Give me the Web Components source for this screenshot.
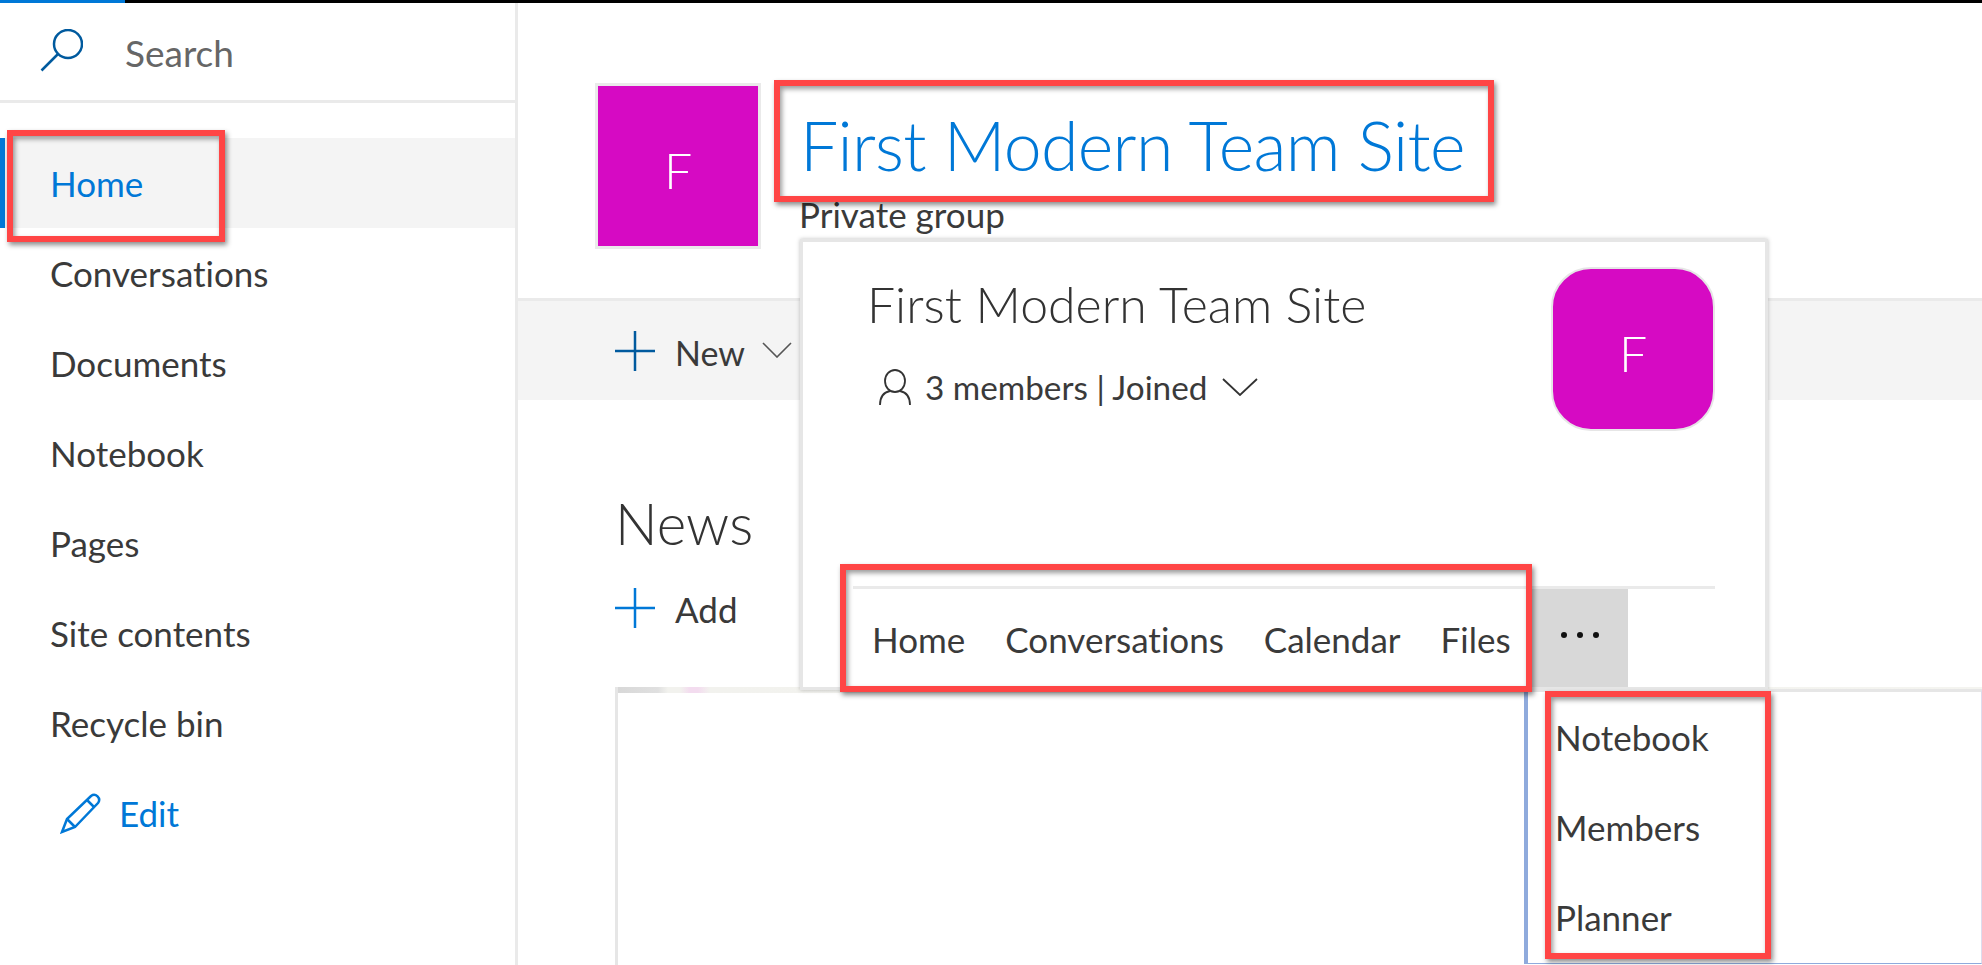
<!DOCTYPE html>
<html lang="en">
<head>
<meta charset="utf-8">
<title>First Modern Team Site</title>
<style>
  html,body{margin:0;height:100%;background:#fff}
  body{font-family:Lato,'Segoe UI','Open Sans',sans-serif;color:#333;overflow:hidden;font-variant-ligatures:none}
  .page{position:relative;width:1982px;height:965px;overflow:hidden}
  .cols{display:grid;grid-template-columns:518px 1fr;height:962px}
</style>
</head>
<body>
<div class="page">
  <sp-top-bar></sp-top-bar>
  <div class="cols">
    <sp-nav>
      <sp-nav-item active>Home</sp-nav-item>
      <sp-nav-item>Conversations</sp-nav-item>
      <sp-nav-item>Documents</sp-nav-item>
      <sp-nav-item>Notebook</sp-nav-item>
      <sp-nav-item>Pages</sp-nav-item>
      <sp-nav-item>Site contents</sp-nav-item>
      <sp-nav-item>Recycle bin</sp-nav-item>
      <sp-nav-edit>Edit</sp-nav-edit>
    </sp-nav>
    <sp-main></sp-main>
  </div>
  <sp-group-card></sp-group-card>
  <sp-more-menu>
    <span>Notebook</span>
    <span>Members</span>
    <span>Planner</span>
  </sp-more-menu>
  <!-- red annotations drawn over the screenshot -->
  <sp-callout style="left:7px;top:130px;width:218px;height:112px"></sp-callout>
  <sp-callout style="left:774px;top:80px;width:720px;height:122px"></sp-callout>
  <sp-callout style="left:840px;top:564px;width:692px;height:128px"></sp-callout>
  <sp-callout style="left:1545px;top:691px;width:226px;height:268px"></sp-callout>
</div>

<script>
const PLUS = color => `<svg width="40" height="40" viewBox="0 0 40 40"><path d="M0 20H40M20 0V40" stroke="${color}" stroke-width="2.5" fill="none"/></svg>`;

class SpTopBar extends HTMLElement {
  constructor() {
    super();
    this.attachShadow({ mode: 'open' }).innerHTML = `
    <style>
      :host{display:block;height:3px;background:#000}
      .progress{width:125px;height:3px;background:#0078d7}
    </style>
    <div class="progress"></div>`;
  }
}

class SpNav extends HTMLElement {
  constructor() {
    super();
    this.attachShadow({ mode: 'open' }).innerHTML = `
    <style>
      :host{display:block;border-right:3px solid #eaeaea;box-sizing:border-box;height:100%}
      .search{display:flex;align-items:center;height:97px;border-bottom:3px solid #eaeaea;box-sizing:content-box;padding-left:40px;gap:42px;color:#666;font-size:37px}
      .search svg{display:block;margin-top:-2px}
      .search span{padding-top:2px}
      .items{display:flex;flex-direction:column;padding-top:35px}
    </style>
    <div class="search">
      <svg width="43" height="43" viewBox="0 0 43 43" fill="none" stroke="#005a9e" stroke-width="2.5"><circle cx="28" cy="15" r="14"/><path d="M18 25L1.5 41.5"/></svg>
      <span>Search</span>
    </div>
    <div class="items"><slot></slot></div>`;
  }
}

class SpNavItem extends HTMLElement {
  constructor() {
    super();
    this.attachShadow({ mode: 'open' }).innerHTML = `
    <style>
      :host{display:flex;align-items:center;height:90px;padding-left:50px;font-size:35px;color:#3a3a3a;box-sizing:border-box;line-height:90px}
      :host([active]){background:#f4f4f4;color:#0078d7;box-shadow:inset 5px 0 0 #0078d7}
    </style>
    <slot></slot>`;
  }
}

class SpNavEdit extends HTMLElement {
  constructor() {
    super();
    this.attachShadow({ mode: 'open' }).innerHTML = `
    <style>
      :host{display:flex;align-items:center;height:90px;padding-left:60px;gap:18px;font-size:35px;color:#0078d7}
      svg{display:block}
    </style>
    <svg width="41" height="41" viewBox="0 0 41 41" fill="none" stroke="#0078d7" stroke-width="2.5"><path d="M2 39L7 26L31 3a5 5 0 0 1 7 7L15 34Z"/><path d="M7 26L15 34M27 7L34 14"/></svg>
    <slot></slot>`;
  }
}

class SpMain extends HTMLElement {
  constructor() {
    super();
    this.attachShadow({ mode: 'open' }).innerHTML = `
    <style>
      :host{display:flex;flex-direction:column;height:100%;min-width:0}
      .header{display:flex;height:295px;box-sizing:border-box;padding:80px 0 0 77px;gap:43px}
      .logo{width:160px;height:160px;box-sizing:content-box;border:3px solid #eaeaea;background:#d60ac3;color:#fff;display:flex;align-items:center;justify-content:center;font-size:50px;font-weight:300}
      .logo span{padding-top:8px}
      .titles{display:flex;flex-direction:column;margin-left:-5px}
      h1{margin:0 0 0 1px;font-size:68px;letter-spacing:-.65px;font-weight:300;color:#0078d7;line-height:100px;padding-top:12px}
      .sub{font-size:35px;line-height:40px;color:#3a3a3a;margin-top:-1px}
      .bar{display:flex;align-items:center;height:99px;border-top:3px solid #eaeaea;background:#f4f4f4;padding-left:97px;font-size:34px;color:#3a3a3a}
      .bar svg{display:block}
      .bar .label{margin-left:20px;padding-top:3px}
      .chev{margin-left:17px;margin-top:-2px}
      .news{flex:1;display:flex;flex-direction:column;padding-left:97px;min-height:0}
      h2{margin:0;font-size:56.5px;font-weight:300;line-height:80px;padding-top:83px;color:#333}
      .add{display:flex;align-items:center;height:40px;gap:20px;font-size:35px;margin-top:25px;color:#3a3a3a}
      .add svg{display:block}
      .add span{padding-top:2px}
      .image{flex:1;margin-top:59px;border-left:3px solid #e6e6e6}
      .strip{height:6px;background:linear-gradient(90deg,#d8d8d8 0,#e0e0e0 40px,#f2f2ee 50px,#f2f2ee 62px,#f3dcef 72px,#f3dcef 80px,#f2f2ee 92px,#f4f4f0 100%)}
    </style>
    <div class="header">
      <div class="logo"><span>F</span></div>
      <div class="titles">
        <h1>First Modern Team Site</h1>
        <div class="sub">Private group</div>
      </div>
    </div>
    <div class="bar">
      ${PLUS('#005a9e')}
      <span class="label">New</span>
      <svg class="chev" width="30" height="16" viewBox="0 0 30 16" fill="none" stroke="#555" stroke-width="1.6"><path d="M1 1L15 15L29 1"/></svg>
    </div>
    <div class="news">
      <h2>News</h2>
      <div class="add">${PLUS('#0078d7')}<span>Add</span></div>
      <div class="image"><div class="strip"></div></div>
    </div>`;
  }
}

class SpGroupCard extends HTMLElement {
  constructor() {
    super();
    this.attachShadow({ mode: 'open' }).innerHTML = `
    <style>
      :host{position:absolute;left:800px;top:239px;width:968px;height:451px;box-sizing:border-box;background:#fff;border:3px solid #e6e6e6;box-shadow:0 0 4px rgba(0,0,0,.25);display:flex;flex-direction:column}
      .top{display:flex;justify-content:space-between;height:345px;box-sizing:border-box;padding:25px 50px 0 64px}
      h3{margin:0;font-size:50px;font-weight:300;line-height:64px;color:#333;padding-top:5px}
      .meta{display:flex;align-items:center;margin:31px 0 0 12px;font-size:33.3px;color:#3a3a3a;height:40px}
      .meta svg{display:block}
      .meta span{margin-left:14px}
      .meta .chev{margin-left:15px}
      .tile{width:160px;height:160px;border:2px solid #e6e6e6;border-radius:40px;background:#d60ac3;color:#fff;display:flex;align-items:center;justify-content:center;font-size:50px;font-weight:300}
      .tile span{padding-top:8px}
      .tabs{margin-left:50px;width:862px;border-top:3px solid #eaeaea;display:flex;flex:1;font-size:35px;color:#3a3a3a}
      .tab{display:flex;align-items:center;margin-left:20px;margin-right:20px;padding-top:2px}
      .tab:first-child{margin-left:19px}
      .more{margin-left:auto;display:flex;align-items:center;justify-content:center;gap:10px;width:96px;height:98px;background:#d8d8d8;margin-right:87px}
      .more i{width:6px;height:6px;border-radius:50%;background:#111;margin-top:-6px}
    </style>
    <div class="top">
      <div>
        <h3>First Modern Team Site</h3>
        <div class="meta">
          <svg width="32" height="36" viewBox="0 0 32 36" fill="none" stroke="#333" stroke-width="1.8"><ellipse cx="16" cy="12" rx="10" ry="11"/><path d="M1 36c0-9 5-13 10-14M31 36c0-9-5-13-10-14"/></svg>
          <span>3 members | Joined</span>
          <svg class="chev" width="36" height="18" viewBox="0 0 36 18" fill="none" stroke="#333" stroke-width="1.8"><path d="M1 1L18 17L35 1"/></svg>
        </div>
      </div>
      <div class="tile"><span>F</span></div>
    </div>
    <div class="tabs">
      <div class="tab">Home</div>
      <div class="tab">Conversations</div>
      <div class="tab">Calendar</div>
      <div class="tab">Files</div>
      <div class="more"><i></i><i></i><i></i></div>
    </div>`;
  }
}

class SpMoreMenu extends HTMLElement {
  constructor() {
    super();
    this.attachShadow({ mode: 'open' }).innerHTML = `
    <style>
      :host{position:absolute;left:1524px;top:689px;width:458px;height:275px;box-sizing:border-box;background:#fff;border-top:3px solid #e6e6e6;border-left:4px solid #8faadc;border-bottom:1px solid #8faadc;border-right:1px solid #dde;display:flex;flex-direction:column;padding:0 0 0 27px;font-size:35px;color:#3a3a3a}
      ::slotted(span){display:flex;align-items:center;height:90px;flex:none}
    </style>
    <slot></slot>`;
  }
}

class SpCallout extends HTMLElement {
  constructor() {
    super();
    this.attachShadow({ mode: 'open' }).innerHTML = `
    <style>
      :host{position:absolute;box-sizing:border-box;border:6px solid #ff4545;box-shadow:2px 3px 5px rgba(0,0,0,.45),inset 2px 3px 5px rgba(0,0,0,.4)}
    </style>`;
  }
}

customElements.define('sp-top-bar', SpTopBar);
customElements.define('sp-nav', SpNav);
customElements.define('sp-nav-item', SpNavItem);
customElements.define('sp-nav-edit', SpNavEdit);
customElements.define('sp-main', SpMain);
customElements.define('sp-group-card', SpGroupCard);
customElements.define('sp-more-menu', SpMoreMenu);
customElements.define('sp-callout', SpCallout);
</script>
</body>
</html>
